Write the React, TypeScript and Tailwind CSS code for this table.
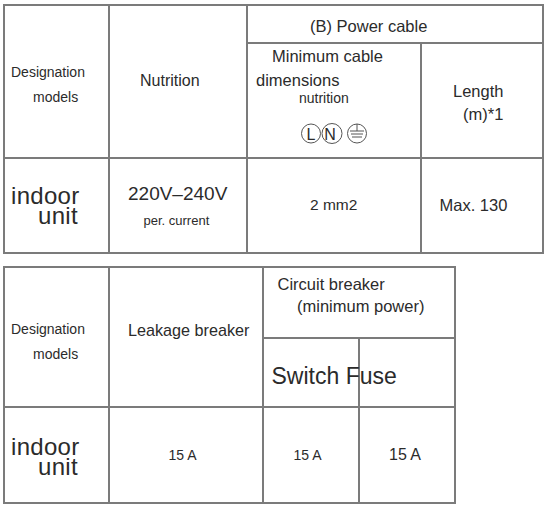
import React from 'react';

const line = "border-r-2 border-b-2 border-[#7b7b7b]";

function EarthMarks() {
  return (
    <svg width="70" height="22" viewBox="0 0 70 22" className="block">
      <g fill="none" stroke="#555" strokeWidth="1">
        <circle cx="11" cy="10.5" r="9.5" />
        <circle cx="32" cy="10.5" r="10" />
        <circle cx="57" cy="10.5" r="9.5" />
        <line x1="57" y1="1" x2="57" y2="8" />
        <line x1="50" y1="8" x2="64" y2="8" />
        <line x1="51" y1="11" x2="63" y2="11" />
        <line x1="52" y1="14" x2="62" y2="14" />
      </g>
      <text x="11" y="16.5" fontSize="16" textAnchor="middle" fill="#2b2b2b" fontFamily="'Liberation Sans', Arial, sans-serif">L</text>
      <text x="30" y="16.5" fontSize="16" textAnchor="middle" fill="#2b2b2b" fontFamily="'Liberation Sans', Arial, sans-serif">N</text>
    </svg>
  );
}

function Designation({ top }: { top: string }) {
  return (
    <div className={`${line} row-span-2 text-[14px] leading-[25px] ${top}`}>
      <div className="pl-[6px]">Designation</div>
      <div className="pl-[28px]">models</div>
    </div>
  );
}

function IndoorUnit({ top }: { top: string }) {
  return (
    <div className={`${line} text-[24px] leading-[20px] ${top}`}>
      <div className="pl-[6px] tracking-[0.3px]">indoor</div>
      <div className="pl-[33px] tracking-[0.3px]">unit</div>
    </div>
  );
}

export default function App() {
  return (
    <div className="min-h-screen bg-white pl-[3px] pt-[4px] text-[#2b2b2b] font-['Liberation_Sans',Arial,sans-serif]">
      {/* (B) Power cable */}
      <div className="grid w-fit grid-cols-[105px_138px_174px_122px] grid-rows-[38px_115px_95px] border-l-2 border-t-2 border-[#7b7b7b]">
        <Designation top="pt-[54px]" />
        <div className={`${line} row-span-2 pl-[30px] pt-[64.5px] text-[16px] leading-[20px]`}>Nutrition</div>
        <div className={`${line} col-span-2 pl-[62px] pt-[10px] text-[16.5px] leading-[20px]`}>(B) Power cable</div>
        <div className={`${line} text-[16.5px] leading-[24px]`}>
          <div className="pl-[24px]">Minimum cable</div>
          <div className="pl-[8px]">dimensions</div>
          <div className="pl-[51px] text-[14px] leading-[12px]">nutrition</div>
          <div className="pl-[52px] pt-[19px]">
            <EarthMarks />
          </div>
        </div>
        <div className={`${line} pt-[36px] text-[16.5px] leading-[23px]`}>
          <div className="pl-[31px]">Length</div>
          <div className="pl-[41px]">(m)*1</div>
        </div>

        <IndoorUnit top="pt-[27px]" />
        <div className={`${line} pt-[23px]`}>
          <div className="pl-[18px] text-[19px] leading-[24px]">220V–240V</div>
          <div className="pl-[33.5px] text-[13px] leading-[29px]">per. current</div>
        </div>
        <div className={`${line} pl-[62px] pt-[36px] text-[15.5px] leading-[20px]`}>2 mm2</div>
        <div className={`${line} pl-[17.5px] pt-[36px] text-[16.5px] leading-[20px]`}>Max. 130</div>
      </div>

      {/* Circuit breaker */}
      <div className="mt-[12px] grid w-fit grid-cols-[105px_154px_96px_96px] grid-rows-[71px_69px_96px] border-l-2 border-t-2 border-[#7b7b7b]">
        <Designation top="pt-[48.5px]" />
        <div className={`${line} row-span-2 pl-[18px] pt-[51.5px] text-[16.2px] leading-[20px]`}>Leakage breaker</div>
        <div className={`${line} col-span-2 pt-[6px] text-[16.5px] leading-[21.5px]`}>
          <div className="pl-[13.5px]">Circuit breaker</div>
          <div className="pl-[33px]">(minimum power)</div>
        </div>
        <div className={`${line} whitespace-nowrap pl-[7.5px] pt-[23px] text-[23px] leading-[28px]`}>Switch Fuse</div>
        <div className={line}></div>

        <IndoorUnit top="pt-[28.5px]" />
        <div className={`${line} pl-[58.5px] pt-[38px] text-[14px] leading-[18px]`}>15 A</div>
        <div className={`${line} pl-[29.5px] pt-[38px] text-[14px] leading-[18px]`}>15 A</div>
        <div className={`${line} pl-[29px] pt-[36.5px] text-[16px] leading-[20px]`}>15 A</div>
      </div>
    </div>
  );
}
